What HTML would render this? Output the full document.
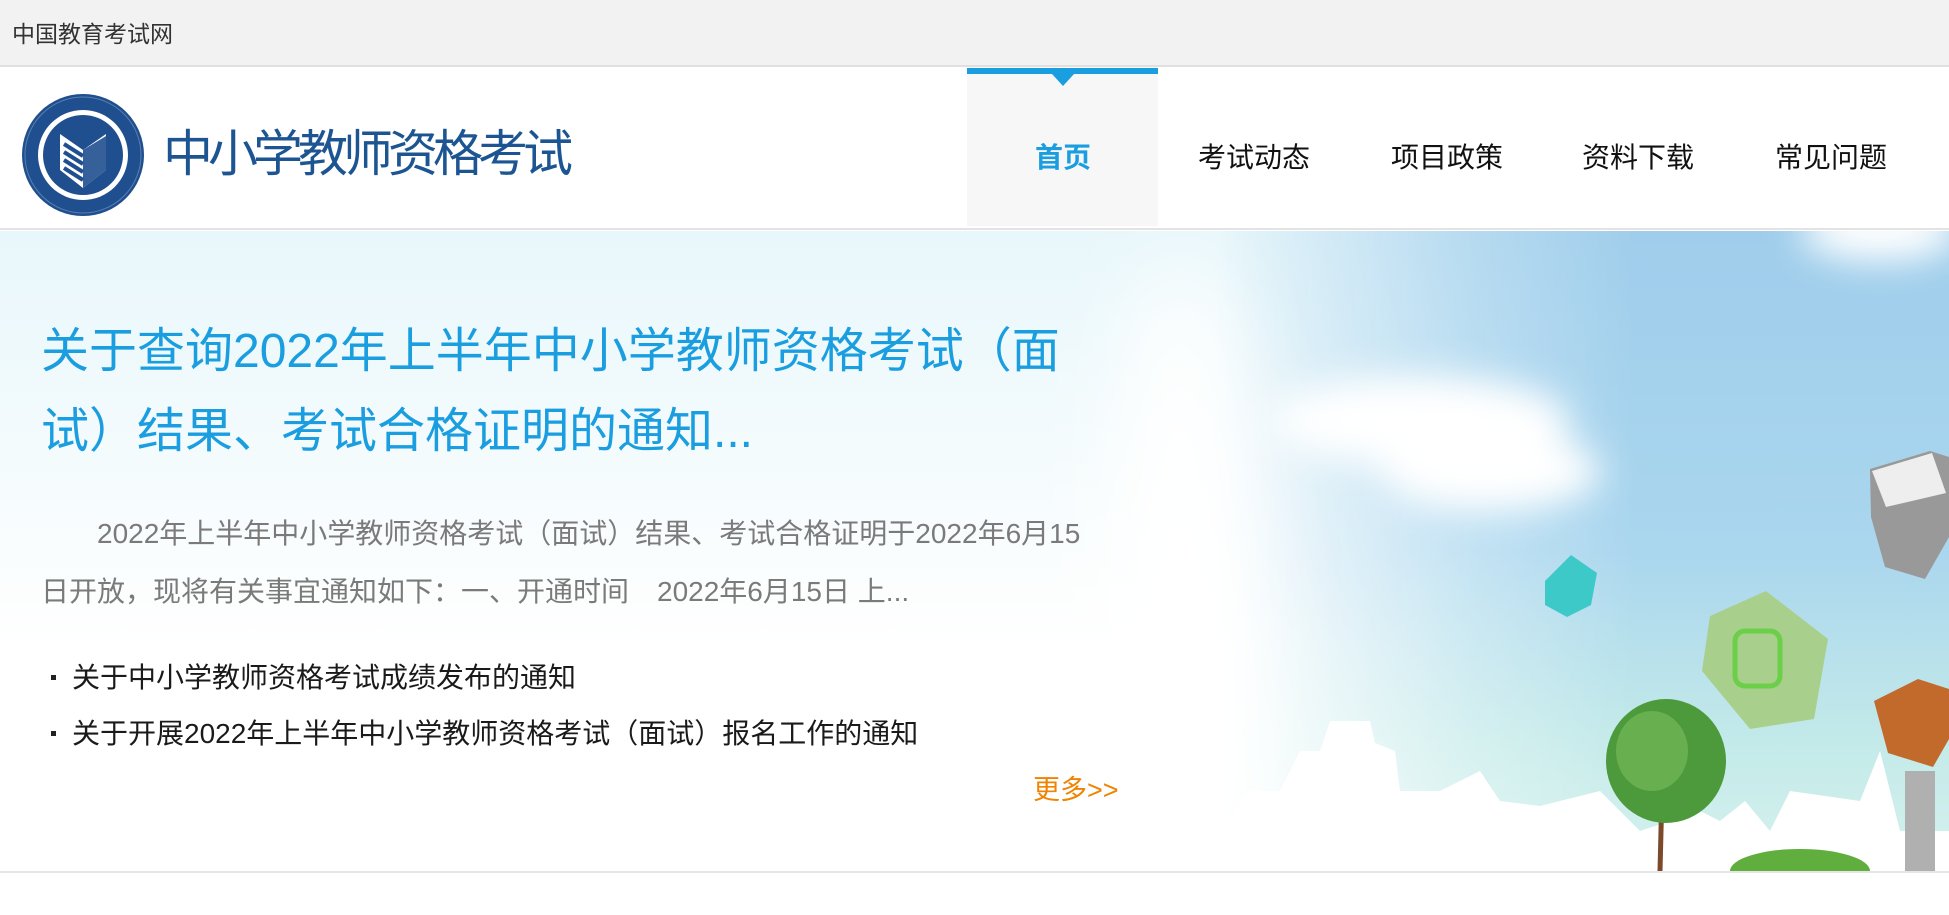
<!DOCTYPE html>
<html><head><meta charset="utf-8">
<style>
*{margin:0;padding:0;box-sizing:border-box}
body{width:1949px;height:915px;overflow:hidden;background:#fff;font-family:"Liberation Sans","Noto Sans CJK SC",sans-serif;position:relative}
.top{position:absolute;left:0;top:0;width:1949px;height:67px;background:#f2f2f2;border-bottom:2px solid #e0e0e0}
.top span{position:absolute;left:12px;top:19px;font-size:23px;line-height:30px;color:#333}
.hdr{position:absolute;left:0;top:67px;width:1949px;height:163px;background:#fff;border-bottom:2px solid #e3e3e3}
.logot{position:absolute;left:163px;top:124px;font-size:50px;line-height:60px;color:#1d5592;letter-spacing:-5px}
.act{position:absolute;left:967px;top:68px;width:191px;height:158px;background:#f7f7f7;border-top:6px solid #1a9ee0}
.act:after{content:"";position:absolute;left:85px;top:0;border-left:11px solid transparent;border-right:11px solid transparent;border-top:12px solid #1a9ee0}
.nav{position:absolute;top:140px;font-size:28px;line-height:36px;color:#111;transform:translateX(-50%)}
.banner{position:absolute;left:0;top:231px;width:1949px;height:640px;overflow:hidden;
background:linear-gradient(180deg,#e8f7fb 0,#f4fbfd 35%,#fff 65%,#fff 100%)}
.sep{position:absolute;left:0;top:871px;width:1949px;height:2px;background:#e6e6e6}
.t1{position:absolute;left:41px;top:312px;width:1080px;font-size:48px;line-height:80px;color:#1a9ee0}
.p{position:absolute;left:41px;top:505px;width:1060px;font-size:28px;line-height:58px;color:#7a7a7a;text-indent:56px}
.li{position:absolute;left:72px;font-size:28px;line-height:36px;color:#1a1a1a}
.li:before{content:"";position:absolute;left:-21px;top:15px;width:5px;height:5px;background:#222}
.more{position:absolute;left:1033px;top:772px;font-size:27px;line-height:36px;color:#f08300}
</style></head><body>
<div class="top"><span>中国教育考试网</span></div>
<div class="hdr"></div>
<svg style="position:absolute;left:20px;top:92px" width="126" height="126" viewBox="0 0 126 126">
<circle cx="63" cy="63" r="61" fill="#1f4f8e"/>
<circle cx="63" cy="63" r="58" fill="none" stroke="#5a7fb0" stroke-width="1"/>
<circle cx="63" cy="63" r="45" fill="#fff"/>
<circle cx="63" cy="63" r="40" fill="#1f4f8e"/>
<path d="M40 42 L63 58 L86 42 L86 78 L63 96 L40 78 Z" fill="#fff"/>
<path d="M44 52 L63 64 M44 60 L63 72 M44 68 L63 80 M44 76 L63 88" stroke="#1f4f8e" stroke-width="4"/>
<path d="M63 58 L86 44 L86 78 L63 96Z" fill="#1f4f8e" opacity=".9"/>
</svg>
<div class="logot">中小学教师资格考试</div>
<div class="act"></div>
<div class="nav" style="left:1063px;color:#1a9ee0;font-weight:bold">首页</div>
<div class="nav" style="left:1254px">考试动态</div>
<div class="nav" style="left:1447px">项目政策</div>
<div class="nav" style="left:1638px">资料下载</div>
<div class="nav" style="left:1831px">常见问题</div>
<div class="banner">
<svg width="1949" height="640" style="position:absolute;left:0;top:0">
<defs>
<linearGradient id="sky" x1="0" y1="0" x2="0" y2="1">
<stop offset="0" stop-color="#9fcdeb"/><stop offset=".5" stop-color="#aad6ee"/><stop offset=".8" stop-color="#c3eae9"/><stop offset="1" stop-color="#d6f2ee"/></linearGradient>
<linearGradient id="mg" x1="0" y1="0" x2="1" y2="0">
<stop offset="0" stop-color="#fff" stop-opacity="0"/><stop offset=".3" stop-color="#fff" stop-opacity="0"/><stop offset=".55" stop-color="#fff" stop-opacity=".7"/><stop offset=".7" stop-color="#fff" stop-opacity="1"/></linearGradient>
<mask id="m"><rect x="900" y="0" width="1049" height="640" fill="url(#mg)"/></mask>
<filter id="bl" x="-100%" y="-100%" width="300%" height="300%"><feGaussianBlur stdDeviation="18"/></filter>
<filter id="bl2" x="-200%" y="-50%" width="500%" height="200%"><feGaussianBlur stdDeviation="40"/></filter>
</defs>
<rect x="900" y="0" width="1049" height="640" fill="url(#sky)" mask="url(#m)"/>
<g filter="url(#bl2)" fill="#fff">
<ellipse cx="1180" cy="360" rx="70" ry="330"/>
</g>
<g filter="url(#bl)" fill="#fff">
<ellipse cx="1420" cy="190" rx="150" ry="45"/>
<ellipse cx="1490" cy="240" rx="110" ry="40"/>
<ellipse cx="1880" cy="0" rx="80" ry="30"/>
</g>
<path d="M1545 350 l26-26 26 18 -6 32 -24 12 -22-12z" fill="#3ec9c9"/>
<path d="M1710 385 l56-25 62 48 -14 80 -64 10 -48-58z" fill="#a9cf8c"/>
<rect x="1735" y="400" width="45" height="55" rx="10" fill="none" stroke="#6bcf4a" stroke-width="5"/>
<path d="M1870 238 l60-18 19 6 0 80 -24 42 -40-12 -14-50z" fill="#999"/>
<path d="M1872 240 l60-18 14 40 -60 14z" fill="#eee"/>
<path d="M1874 470 l44-22 31 10 0 50 -16 28 -45-14z" fill="#c26a2c"/>
<path d="M1060 640 L1060 600 1100 595 1140 590 1160 598 1180 590 1200 600 1230 585 1250 560 1280 560 1300 520 1320 520 1330 490 1370 490 1375 512 1395 520 1400 560 1440 560 1460 550 1480 540 1500 570 1540 575 1600 560 1640 600 1700 580 1720 590 1745 570 1770 600 1790 560 1860 570 1880 520 1900 600 1949 600 1949 640 Z" fill="#fff"/>
<path d="M1663 520 L1660 640 M1663 590 l-18-20 M1664 585 l16-18" stroke="#7a4a2a" stroke-width="5"/>
<ellipse cx="1666" cy="530" rx="60" ry="62" fill="#4d9a3c"/>
<ellipse cx="1652" cy="520" rx="36" ry="40" fill="#6fb454" opacity=".8"/>
<ellipse cx="1800" cy="640" rx="70" ry="22" fill="#5fae3e"/>
<rect x="1905" y="540" width="30" height="100" fill="#b0b0b0"/>
</svg>
</div>
<div class="sep"></div>
<div class="t1">关于查询2022年上半年中小学教师资格考试（面试）结果、考试合格证明的通知...</div>
<div class="p">2022年上半年中小学教师资格考试（面试）结果、考试合格证明于2022年6月15日开放，现将有关事宜通知如下：一、开通时间　2022年6月15日 上...</div>
<div class="li" style="top:660px">关于中小学教师资格考试成绩发布的通知</div>
<div class="li" style="top:716px">关于开展2022年上半年中小学教师资格考试（面试）报名工作的通知</div>
<div class="more">更多&gt;&gt;</div>
</body></html>
